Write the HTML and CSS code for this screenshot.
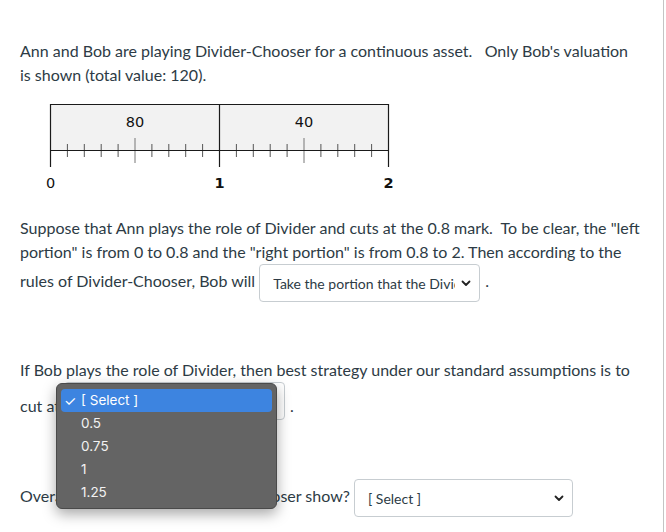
FILE: index.html
```html
<!DOCTYPE html>
<html>
<head>
<meta charset="utf-8">
<link rel="stylesheet" href="styles.css">
</head>
<body>
<div class="page">
  <div class="content">
    <p class="text">Ann and Bob are playing Divider-Chooser for a continuous asset. &nbsp; Only Bob's valuation is shown (total value: 120).</p>
    <svg class="figure" width="360" height="95" viewBox="0 0 360 95">
      <rect x="10.5" y="4.5" width="338" height="46" fill="#f2f2f2" stroke="#1a1a1a" stroke-width="1"/>
      <g stroke="#555" stroke-width="1">
        <line x1="27.4" y1="44" x2="27.4" y2="57"/>
        <line x1="44.3" y1="44" x2="44.3" y2="57"/>
        <line x1="61.2" y1="44" x2="61.2" y2="57"/>
        <line x1="78.1" y1="44" x2="78.1" y2="57"/>
        <line x1="111.9" y1="44" x2="111.9" y2="57"/>
        <line x1="128.8" y1="44" x2="128.8" y2="57"/>
        <line x1="145.7" y1="44" x2="145.7" y2="57"/>
        <line x1="162.6" y1="44" x2="162.6" y2="57"/>
        <line x1="196.4" y1="44" x2="196.4" y2="57"/>
        <line x1="213.3" y1="44" x2="213.3" y2="57"/>
        <line x1="230.2" y1="44" x2="230.2" y2="57"/>
        <line x1="247.1" y1="44" x2="247.1" y2="57"/>
        <line x1="280.9" y1="44" x2="280.9" y2="57"/>
        <line x1="297.8" y1="44" x2="297.8" y2="57"/>
        <line x1="314.7" y1="44" x2="314.7" y2="57"/>
        <line x1="331.6" y1="44" x2="331.6" y2="57"/>
      </g>
      <g stroke="#777" stroke-width="1">
        <line x1="95" y1="38" x2="95" y2="63"/>
        <line x1="264" y1="38" x2="264" y2="63"/>
      </g>
      <g stroke="#1a1a1a" stroke-width="1.2">
        <line x1="10.5" y1="50.5" x2="348.5" y2="50.5"/>
        <line x1="10.5" y1="4" x2="10.5" y2="67"/>
        <line x1="179.5" y1="4" x2="179.5" y2="67"/>
        <line x1="348.5" y1="4" x2="348.5" y2="67"/>
      </g>
      <g class="fig-text">
        <text x="95" y="27" text-anchor="middle">80</text>
        <text x="264" y="27" text-anchor="middle">40</text>
        <text x="10.5" y="88" text-anchor="middle">0</text>
        <text x="179.5" y="88" text-anchor="middle" class="bold">1</text>
        <text x="348.5" y="88" text-anchor="middle" class="bold">2</text>
      </g>
    </svg>
    <p class="text p2">Suppose that Ann plays the role of Divider and cuts at the 0.8 mark. &nbsp;To be clear, the "left portion" is from 0 to 0.8 and the "right portion" is from 0.8 to 2. Then according to the rules of Divider-Chooser, Bob will <span class="sel sel-a"><select><option>Take the portion that the Divider chose</option></select><svg class="chev" width="10" height="7" viewBox="0 0 10 7"><path d="M1.5 1.5 L5 5 L8.5 1.5" fill="none" stroke="#222" stroke-width="1.8" stroke-linecap="round" stroke-linejoin="round"/></svg></span><span class="dot">.</span></p>
    <p class="text p3">If Bob plays the role of Divider, then best strategy under our standard assumptions is to cut at <span class="sel sel-b"><select><option>[ Select ]</option></select><svg class="chev" width="10" height="7" viewBox="0 0 10 7"><path d="M1.5 1.5 L5 5 L8.5 1.5" fill="none" stroke="#222" stroke-width="1.8" stroke-linecap="round" stroke-linejoin="round"/></svg></span><span class="dot">.</span></p>
    <p class="text p4">Overall, which value should the Chooser show? <span class="sel sel-c"><select><option>[ Select ]</option></select><svg class="chev" width="10" height="7" viewBox="0 0 10 7"><path d="M1.5 1.5 L5 5 L8.5 1.5" fill="none" stroke="#222" stroke-width="1.8" stroke-linecap="round" stroke-linejoin="round"/></svg></span></p>
  </div>
  <div class="popup">
    <div class="opt active"><span class="check">✓</span>[ Select ]</div>
    <div class="opt">0.5</div>
    <div class="opt">0.75</div>
    <div class="opt">1</div>
    <div class="opt">1.25</div>
  </div>
</div>
</body>
</html>
```

FILE: styles.css
```css
html, body {
  margin: 0;
  padding: 0;
  background: #fff;
}

.page {
  position: relative;
  width: 663px;
  height: 532px;
  border-right: 1px solid #c4c4c4;
  overflow: hidden;
}

.content {
  padding: 39px 22px 0 20px;
}

.text {
  margin: 0;
  font-family: Lato, "Open Sans", sans-serif;
  font-size: 16px;
  line-height: 24px;
  color: #2d3b45;
}

.figure {
  display: block;
  margin: 13px 0 0 20px;
}

.fig-text {
  font-family: "DejaVu Sans", Verdana, sans-serif;
  font-size: 14.5px;
  fill: #111;
}

.fig-text .bold {
  font-weight: 600;
}

.p2 {
  margin-top: 21px;
}

.p3 {
  margin-top: 56px;
}

.p4 {
  margin-top: 59px;
}

.sel {
  display: inline-block;
  position: relative;
  vertical-align: middle;
}

.sel-b {
  vertical-align: 5px;
}

.sel select {
  appearance: none;
  -webkit-appearance: none;
  display: block;
  height: 38px;
  border: 1px solid #c7cdd1;
  border-radius: 4px;
  background: #fff;
  font-family: Lato, "Open Sans", sans-serif;
  font-size: 14px;
  color: #2d3b45;
  padding: 0 24px 0 13px;
  margin: 0;
  outline: none;
}

.sel-a select {
  width: 221px;
}

.sel-b select {
  width: 221px;
}

.sel-c select {
  width: 219px;
}

.chev {
  position: absolute;
  right: 9px;
  top: 16px;
}

.dot {
  margin-left: 5px;
}

.popup {
  position: absolute;
  left: 56px;
  top: 383px;
  width: 221px;
  height: 126px;
  box-sizing: border-box;
  background: #646464;
  border: 1px solid #4a4a4a;
  border-radius: 6px;
  box-shadow: 0 5px 14px rgba(0, 0, 0, 0.35);
  padding: 5px 4px;
  font-family: Inter, "Liberation Sans", sans-serif;
  font-size: 13.5px;
  color: #f2f2f2;
}

.opt {
  position: relative;
  height: 23px;
  line-height: 23px;
  padding-left: 20px;
  border-radius: 4px;
}

.opt.active {
  background: #3d84e0;
  color: #fff;
}

.check {
  position: absolute;
  left: 3px;
  top: 0;
  font-size: 14px;
}
```
